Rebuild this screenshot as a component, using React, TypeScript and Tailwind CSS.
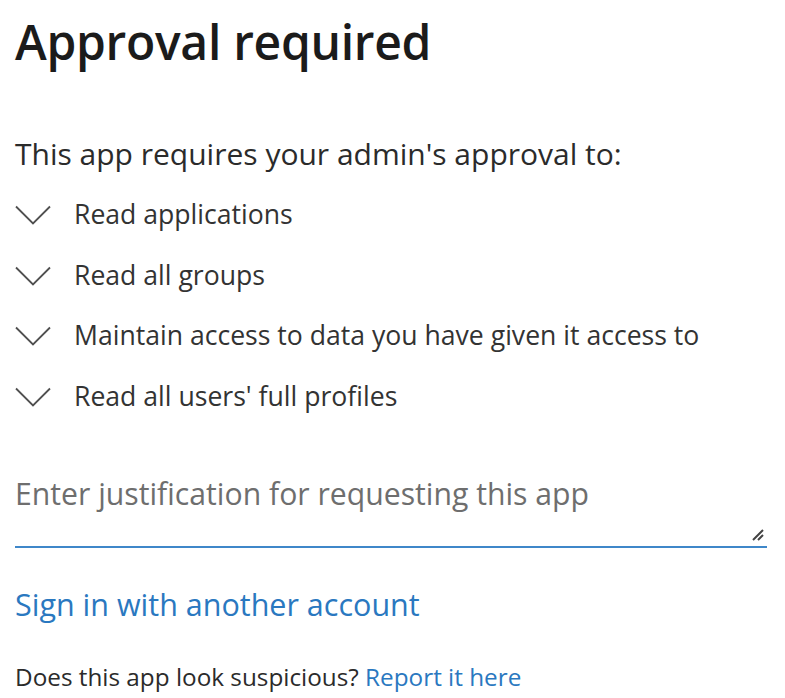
import React from "react";

const permissions = [
  "Read applications",
  "Read all groups",
  "Maintain access to data you have given it access to",
  "Read all users' full profiles",
];

function Chevron() {
  return (
    <svg width="36" height="20" viewBox="0 0 36 20" className="shrink-0">
      <path d="M1 1.5 L18 18.5 L35 1.5" fill="none" stroke="#505050" strokeWidth="1.8" />
    </svg>
  );
}

export default function App() {
  return (
    <div
      className="w-[785px] h-[698px] bg-white text-[#1b1b1b] overflow-hidden pl-[15px] pr-[18px]"
      style={{ fontFamily: '"Segoe UI", "Open Sans", "Noto Sans", sans-serif' }}
    >
      <h1 className="text-[48px] font-semibold leading-none pt-[18px] tracking-[-0.3px]">
        Approval required
      </h1>

      <p className="mt-[70px] text-[30px] leading-[36px] text-[#2b2b2b]">
        This app requires your admin's approval to:
      </p>

      <ul className="mt-[13px] flex flex-col">
        {permissions.map((p) => (
          <li key={p} className="h-[60.5px] flex items-center gap-[23px]">
            <Chevron />
            <span className="text-[26.6px] text-[#333]">{p}</span>
          </li>
        ))}
      </ul>

      <div className="mt-[42px] relative border-b-2 border-[#3f87c9] h-[79px]">
        <textarea
          placeholder="Enter justification for requesting this app"
          className="w-full h-full resize-none outline-none text-[30.2px] leading-[40px] pt-[5px] placeholder:text-[#6e6e6e] bg-transparent"
        />
        <svg width="14" height="14" viewBox="0 0 14 14" className="absolute right-[2px] bottom-[4px]">
          <path d="M2 12 L12 2 M7 12 L12 7" stroke="#444" strokeWidth="2" />
        </svg>
      </div>

      <a href="#" className="block mt-[36px] text-[30.5px] text-[#2a78c0] leading-[40px]">
        Sign in with another account
      </a>

      <p className="mt-[38px] text-[24.3px] leading-[30px] text-[#2b2b2b]">
        Does this app look suspicious?{" "}
        <a href="#" className="text-[#2a78c0]">
          Report it here
        </a>
      </p>
    </div>
  );
}
